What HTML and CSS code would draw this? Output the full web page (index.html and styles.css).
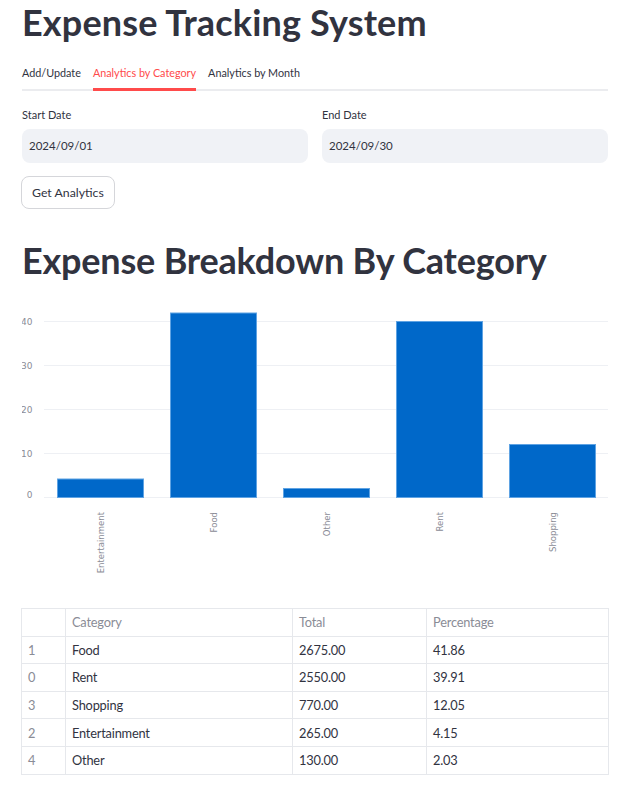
FILE: index.html
```html
<!DOCTYPE html>
<html>
<head>
<meta charset="utf-8">
<link rel="stylesheet" href="styles.css">
</head>
<body>
<main class="page">
  <h1 class="title">Expense Tracking System</h1>
  <nav class="tabs">
    <div class="tab">Add/Update</div>
    <div class="tab active">Analytics by Category</div>
    <div class="tab">Analytics by Month</div>
  </nav>
  <section class="dates">
    <div class="field">
      <div class="label">Start Date</div>
      <div class="input">2024/09/01</div>
    </div>
    <div class="field">
      <div class="label">End Date</div>
      <div class="input">2024/09/30</div>
    </div>
  </section>
  <button class="btn">Get Analytics</button>
  <h2 class="heading">Expense Breakdown By Category</h2>
  <svg class="chart" width="586" height="290" viewBox="0 0 586 290">
    <g class="grid">
      <line x1="22" x2="586" y1="21.5" y2="21.5"/>
      <line x1="22" x2="586" y1="65.5" y2="65.5"/>
      <line x1="22" x2="586" y1="109.5" y2="109.5"/>
      <line x1="22" x2="586" y1="153.5" y2="153.5"/>
      <line x1="22" x2="586" y1="197.5" y2="197.5"/>
    </g>
    <g class="ylab">
      <text x="10.5" y="25">40</text>
      <text x="10.5" y="69">30</text>
      <text x="10.5" y="113">20</text>
      <text x="10.5" y="157">10</text>
      <text x="10.5" y="198">0</text>
    </g>
    <g class="bars">
      <rect x="35.5" y="179" width="86" height="18.5"/>
      <rect x="148.5" y="13" width="86" height="184.5"/>
      <rect x="261.5" y="188.5" width="86" height="9"/>
      <rect x="374.5" y="21.5" width="86" height="176"/>
      <rect x="487.5" y="144.5" width="86" height="53"/>
    </g>
    <g class="xlab">
      <text transform="translate(82,212) rotate(-90)">Entertainment</text>
      <text transform="translate(195,212) rotate(-90)">Food</text>
      <text transform="translate(308,212) rotate(-90)">Other</text>
      <text transform="translate(421,212) rotate(-90)">Rent</text>
      <text transform="translate(534,212) rotate(-90)">Shopping</text>
    </g>
  </svg>
  <table class="data">
    <colgroup>
      <col class="c0"><col class="c1"><col class="c2"><col class="c3">
    </colgroup>
    <thead>
      <tr><th></th><th>Category</th><th>Total</th><th>Percentage</th></tr>
    </thead>
    <tbody>
      <tr><td class="idx">1</td><td>Food</td><td>2675.00</td><td>41.86</td></tr>
      <tr><td class="idx">0</td><td>Rent</td><td>2550.00</td><td>39.91</td></tr>
      <tr><td class="idx">3</td><td>Shopping</td><td>770.00</td><td>12.05</td></tr>
      <tr><td class="idx">2</td><td>Entertainment</td><td>265.00</td><td>4.15</td></tr>
      <tr><td class="idx">4</td><td>Other</td><td>130.00</td><td>2.03</td></tr>
    </tbody>
  </table>
</main>
</body>
</html>
```
FILE: styles.css
```css
* { box-sizing: border-box; }
body {
  margin: 0;
  background: #fff;
  font-family: "Lato", "Open Sans", sans-serif;
  color: #31333F;
}
.page {
  width: 586px;
  margin-left: 22px;
  display: flex;
  flex-direction: column;
  align-items: flex-start;
}
.title {
  margin: 0;
  padding-top: 0;
  font-size: 36px;
  line-height: 44px;
  font-weight: 700;
  letter-spacing: 0.15px;
}
.tabs {
  margin-top: 15px;
  width: 100%;
  display: flex;
  gap: 12px;
  border-bottom: 2px solid #EBECEF;
}
.tab {
  font-size: 10.8px;
  line-height: 20px;
  padding: 4px 0 6px;
  margin-bottom: -2px;
  border-bottom: 2px solid transparent;
}
.tab.active {
  color: #FF4B4B;
  border-bottom: 3px solid #FF4B4B;
  padding-bottom: 5px;
}
.dates {
  margin-top: 15px;
  width: 100%;
  display: grid;
  grid-template-columns: 1fr 1fr;
  gap: 14px;
}
.label {
  font-size: 11px;
  line-height: 18px;
  margin-bottom: 5px;
}
.input {
  height: 34px;
  background: #F0F2F6;
  border-radius: 8px;
  padding: 0 7px;
  font-size: 11.5px;
  line-height: 34px;
}
.btn {
  margin-top: 13px;
  margin-left: -1px;
  height: 33px;
  padding: 0 10px;
  font-family: inherit;
  font-size: 12.3px;
  color: #31333F;
  background: #fff;
  border: 1px solid #D5D6DA;
  border-radius: 8px;
}
.heading {
  margin: 29px 0 0;
  font-size: 36px;
  line-height: 44px;
  font-weight: 700;
  letter-spacing: -0.2px;
}
.chart {
  display: block;
  margin-top: 18px;
}
.grid line { stroke: #EEF0F4; stroke-width: 1; }
.ylab text {
  font-family: "DejaVu Sans", sans-serif;
  font-size: 9px;
  fill: #8A8C96;
  text-anchor: end;
}
.xlab text {
  font-family: "DejaVu Sans", sans-serif;
  font-size: 8.5px;
  fill: #8A8C96;
  text-anchor: end;
}
.bars rect {
  fill: #0068C9;
  stroke: #5FA3E3;
  stroke-width: 1;
}
.data {
  margin-top: 18px;
  margin-left: -1px;
  width: 587px;
  border-collapse: collapse;
  table-layout: fixed;
  font-size: 12.8px;
  letter-spacing: -0.2px;
}
.c0 { width: 44px; }
.c1 { width: 227px; }
.c2 { width: 134px; }
.c3 { width: 182px; }
.data th, .data td {
  border: 1px solid #E6E8EC;
  height: 27.6px;
  padding: 0 6px;
  text-align: left;
  font-weight: 400;
}
.data th { color: #8A8C96; }
.data td.idx { color: #8A8C96; }
```
